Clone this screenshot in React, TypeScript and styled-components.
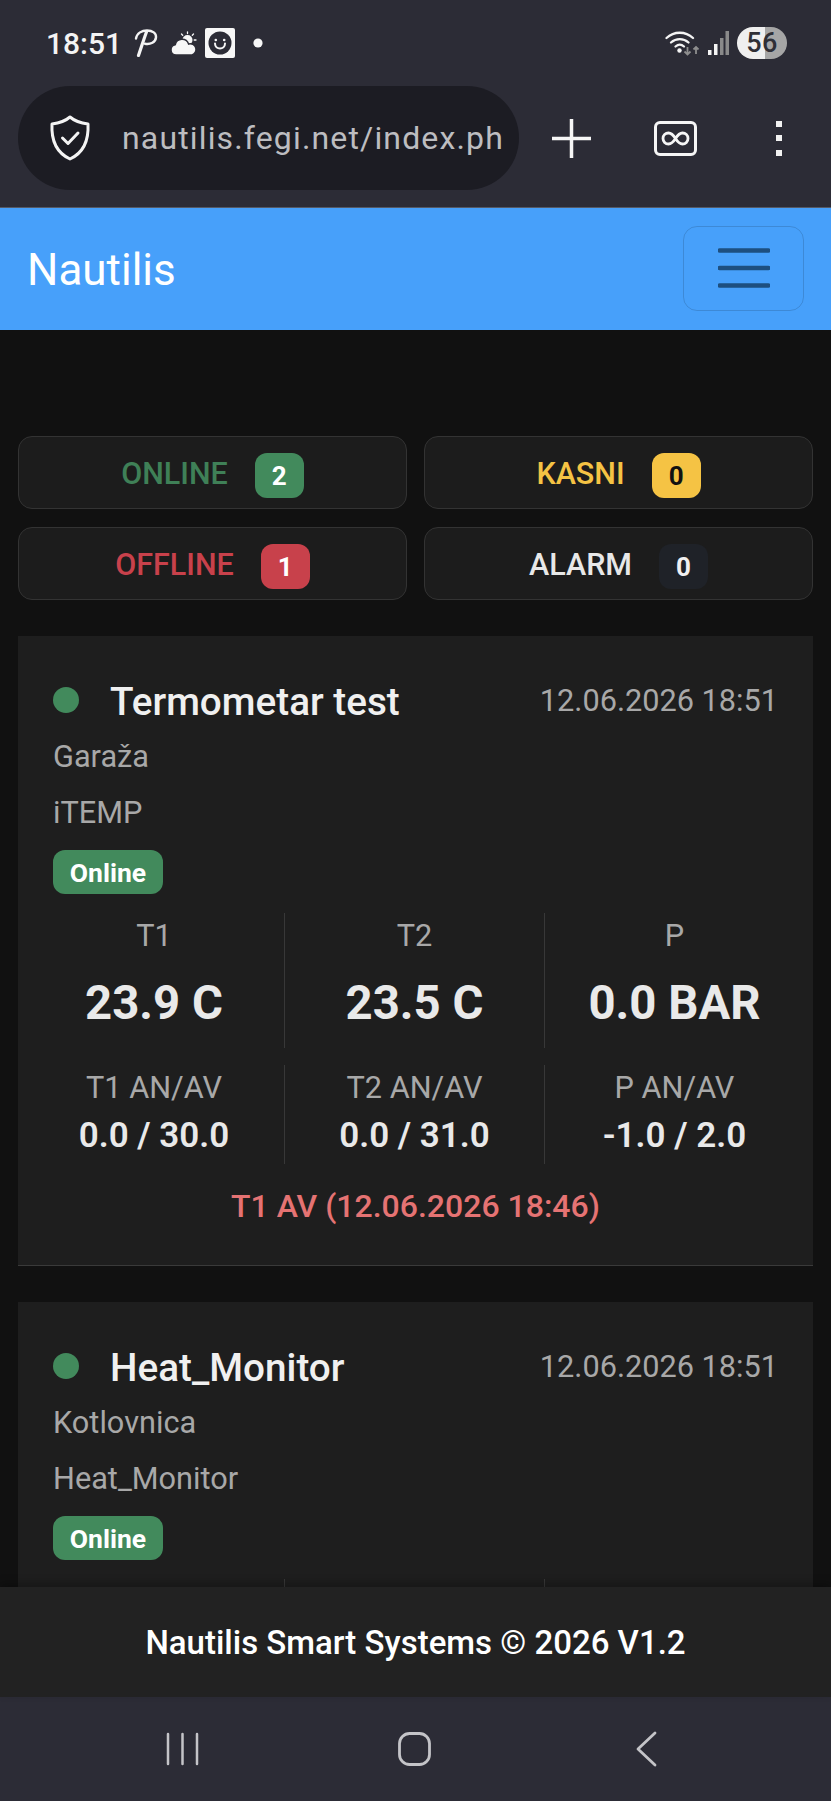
import React from "react";
import styled, { createGlobalStyle } from "styled-components";

const Global = createGlobalStyle`
  html, body { margin: 0; padding: 0; background: #111; }
  * { box-sizing: border-box; }
  body { font-family: Roboto, "Liberation Sans", sans-serif; }
`;

const Page = styled.div`
  width: 831px; height: 1801px; display: flex; flex-direction: column; overflow: hidden; background: #111;
`;
const Chrome = styled.header`
  height: 208px; flex: none; background: #2c2c36; border-bottom: 1px solid #555a66; display: flex; flex-direction: column;
`;
const StatusBar = styled.div`
  height: 86px; display: flex; align-items: center; justify-content: space-between; padding: 0 44px 0 46px;
`;
const StatusGroup = styled.div`
  display: flex; align-items: center;
`;
const Clock = styled.span`
  font-size: 30px; font-weight: 500; color: #f4f4f4; width: 88px;
`;
const Battery = styled.div`
  width: 50px; height: 32px; border-radius: 16px; display: flex; align-items: center; justify-content: center;
  background: linear-gradient(90deg, #efefef 0 56%, #a6a6a6 56% 100%);
  font-size: 27px; font-weight: 500; color: #2f2f36; letter-spacing: .5px;
`;
const BrowserRow = styled.div`
  display: flex; align-items: center; padding-left: 18px; height: 104px;
`;
const UrlPill = styled.div`
  width: 501px; height: 104px; background: #1c1c23; border-radius: 52px; display: flex; align-items: center;
  padding-left: 31px; overflow: hidden; flex: none;
`;
const UrlText = styled.span`
  margin-left: 31px; font-size: 32px; color: #bdbdc0; white-space: nowrap; letter-spacing: 1.15px;
`;
const Action = styled.div`
  width: 104px; flex: none; display: flex; align-items: center; justify-content: center;
`;
const Kebab = styled.div`
  width: 6px; height: 35px; display: flex; flex-direction: column; justify-content: space-between;
  i { display: block; width: 6px; height: 6px; background: #f2f2f2; }
`;
const Navbar = styled.nav`
  height: 122px; flex: none; background: #47a0fa; display: flex; align-items: center; justify-content: space-between; padding: 0 27px 0 27px;
`;
const Brand = styled.span`
  font-size: 44px; color: #fff; line-height: 1; padding-top: 2px;
`;
const Toggler = styled.div`
  width: 121px; height: 85px; margin-top: -2px; border: 1.5px solid rgba(0,0,0,.14); border-radius: 14px; display: flex; align-items: center; justify-content: center;
`;
const Main = styled.main`
  flex: 1; min-height: 0; overflow: hidden; padding: 106px 18px 0;
`;
const StatGrid = styled.div`
  display: grid; grid-template-columns: 389px 389px; column-gap: 17px; row-gap: 18px; margin-bottom: 36px;
`;
const StatButton = styled.div`
  height: 73px; background: #1c1c1c; border: 1.5px solid #333; border-radius: 14px; display: flex; align-items: center; justify-content: center; gap: 27px;
  font-size: 30.5px; font-weight: 500; color: ${p => p.$color};
`;
const StatLabel = styled.span`
  padding-top: 2px;
`;
const StatBadge = styled.span`
  height: 45px; min-width: 49px; padding: 0 16px; margin-top: 6px; border-radius: 12px; display: flex; align-items: center; justify-content: center;
  background: ${p => p.$bg}; color: ${p => p.$fg}; font-size: 26px; font-weight: 700;
`;
const Card = styled.section`
  background: #1e1e1e; border-bottom: 1px solid #3a3a3a; padding: 42px 35px 0; height: 630px; margin-bottom: 36px;
`;
const TitleRow = styled.div`
  display: flex; align-items: center; justify-content: space-between; height: 44px;
`;
const TitleLeft = styled.div`
  display: flex; align-items: center; gap: 31px;
`;
const Dot = styled.span`
  width: 26px; height: 26px; border-radius: 50%; background: #428a5c;
`;
const Title = styled.h2`
  margin: 3px 0 0; font-size: 38.7px; font-weight: 500; color: #f0f0f0; line-height: 44px;
`;
const DateText = styled.span`
  font-size: 30.7px; color: #a8a8a8;
`;
const Meta = styled.div`
  font-size: 30.7px; color: #a8a8a8; line-height: 38px; margin-top: ${p => p.$gap}px;
`;
const StatePill = styled.div`
  margin-top: 18px; width: 110px; height: 44px; border-radius: 12px; background: #428a5c; color: #fff;
  display: flex; align-items: center; justify-content: center; font-size: 26.5px; font-weight: 700;
`;
const MetricGrid = styled.div`
  display: grid; grid-template-columns: repeat(3, 1fr); margin: ${p => p.$top}px -26px 0 -29px; height: ${p => p.$h}px;
`;
const Metric = styled.div`
  text-align: center; border-left: ${p => (p.$first ? "none" : "1px solid #383838")}; display: flex; flex-direction: column; align-items: center;
`;
const MetricLabel = styled.div`
  font-size: 30.7px; color: #a8a8a8; line-height: 38px; margin-top: 4px;
`;
const MetricValue = styled.div`
  font-size: 47.3px; font-weight: 700; color: #e9e9e9; line-height: 54px; margin-top: 21px;
`;
const LimitValue = styled.div`
  font-size: 35px; font-weight: 600; color: #e9e9e9; line-height: 42px; margin-top: 8px;
`;
const AlertLine = styled.div`
  text-align: center; font-size: 32px; font-weight: 500; color: #e57373; line-height: 40px; margin-top: 22px;
`;
const Footer = styled.footer`
  height: 110px; flex: none; background: #222; display: flex; align-items: center; justify-content: center;
  font-size: 33px; font-weight: 500; color: #fff; box-shadow: 0 -4px 8px rgba(0,0,0,.25); position: relative;
`;
const AndroidNav = styled.div`
  height: 104px; flex: none; background: #2c2c36; display: flex; align-items: center; justify-content: center; gap: 199px; padding-right: 2px;
`;

const PLogo = () => (
  <svg width="24" height="28" viewBox="0 0 24 28" style={{ marginRight: 12 }} fill="none" stroke="#f4f4f4" strokeWidth="2.4" strokeLinecap="round">
    <path d="M2 9.5C3 4 8 1.5 13 1.5c5.5 0 9.5 2.6 9 7-.5 4.6-5.5 7.3-11 6.3" />
    <path d="M12.5 3C10 9.5 7.5 18 4.5 26.5" strokeWidth="3.2" />
  </svg>
);
const Weather = () => (
  <svg width="28" height="25" viewBox="0 0 28 25" style={{ marginRight: 7 }} fill="#f7f7f7">
    <circle cx="17.5" cy="9" r="5" />
    <g stroke="#f7f7f7" strokeWidth="1.3" strokeLinecap="round">
      <path d="M17.5 0.8v1.8M11.5 3l1.2 1.3M23.5 3l-1.2 1.3M26 9h-1.8" />
    </g>
    <path d="M6 24a5.2 5.2 0 0 1-.8-10.3A7 7 0 0 1 18.6 13a5.6 5.6 0 0 1 3.4 10.9z" stroke="#2c2c36" strokeWidth="1.5" />
  </svg>
);
const Smiley = () => (
  <svg width="30" height="30" viewBox="0 0 30 30" style={{ marginRight: 18 }}>
    <rect width="30" height="30" rx="2" fill="#f7f7f7" />
    <circle cx="15" cy="15" r="11.5" fill="#2c2c36" />
    <circle cx="10.8" cy="12" r="1.3" fill="#f7f7f7" />
    <circle cx="19.2" cy="12" r="1.3" fill="#f7f7f7" />
    <path d="M10 15.5c0 6.5 10 6.5 10 0" fill="none" stroke="#f7f7f7" strokeWidth="2" strokeLinecap="round" />
  </svg>
);
const StatusDot = () => (
  <svg width="10" height="10" viewBox="0 0 10 10"><circle cx="5" cy="5" r="4.6" fill="#f7f7f7" /></svg>
);
const Wifi = () => (
  <svg width="35" height="26" viewBox="0 0 35 26" fill="none" style={{ marginRight: 8 }}>
    <g stroke="#f4f4f4" strokeWidth="2.3" strokeLinecap="round">
      <path d="M1.5 8C9 1 20.5 1 28 8" />
      <path d="M6 12.5c5-4.5 12.5-4.5 17.5 0" />
      <path d="M10.5 16.5c2.6-2.3 6-2.3 8.5 0" />
    </g>
    <circle cx="14.5" cy="20.5" r="2.2" fill="#f4f4f4" />
    <path d="M22.5 17v7M19.5 21.5l3 3 3-3" stroke="#8e8e8e" strokeWidth="1.8" />
    <path d="M31 24v-7M28.5 19.5l2.5-2.5 2.5 2.5" stroke="#8e8e8e" strokeWidth="1.8" />
  </svg>
);
const Signal = () => (
  <svg width="21" height="24" viewBox="0 0 21 24" style={{ marginRight: 8 }}>
    <rect x="0" y="19" width="3.5" height="5" fill="#f4f4f4" />
    <rect x="6" y="13" width="3.5" height="11" fill="#f4f4f4" />
    <rect x="12" y="7" width="3.5" height="17" fill="#8a8a8a" />
    <rect x="17.5" y="0" width="3.5" height="24" fill="#8a8a8a" />
  </svg>
);
const Shield = () => (
  <svg width="42" height="46" viewBox="0 0 42 46" fill="none" stroke="#f4f4f4" strokeWidth="3" strokeLinejoin="round" strokeLinecap="round">
    <path d="M21 2c4 3.5 10 6 18 7 .8 15-3 28-18 35C6 37 2.2 24 3 9c8-1 14-3.5 18-7z" />
    <path d="M13.5 23l5.5 5.5L29 18" />
  </svg>
);
const Plus = () => (
  <svg width="39" height="39" viewBox="0 0 39 39" stroke="#f6f6f6" strokeWidth="3.5">
    <path d="M0 19.5h39M19.5 0v39" />
  </svg>
);
const TabCount = () => (
  <svg width="43" height="35" viewBox="0 0 43 35" fill="none" stroke="#f6f6f6">
    <rect x="1.5" y="1.5" width="40" height="32" rx="4.5" strokeWidth="3" />
    <path d="M21.5 17.5c-2.5-4-4.5-5.5-7-5.5a5.5 5.5 0 0 0 0 11c2.5 0 4.5-1.5 7-5.5s4.5-5.5 7-5.5a5.5 5.5 0 0 1 0 11c-2.5 0-4.5-1.5-7-5.5z" strokeWidth="2.8" />
  </svg>
);
const Hamburger = () => (
  <svg width="52" height="40" viewBox="0 0 52 40" stroke="#1d4f80" strokeWidth="4.4" strokeLinecap="round">
    <path d="M1.5 2.5h49M1.5 20h49M1.5 37.5h49" />
  </svg>
);
const RecentsIcon = () => (
  <svg width="33" height="34" viewBox="0 0 33 34" stroke="#c4c4c8" strokeWidth="2.5" strokeLinecap="round">
    <path d="M2 2v30M16.5 2v30M31 2v30" />
  </svg>
);
const HomeIcon = () => (
  <svg width="33" height="34" viewBox="0 0 33 34" fill="none" stroke="#c4c4c8" strokeWidth="2.8">
    <rect x="1.5" y="1.5" width="30" height="31" rx="10" />
  </svg>
);
const BackIcon = () => (
  <svg width="33" height="36" viewBox="0 0 33 36" fill="none" stroke="#c4c4c8" strokeWidth="2.8" strokeLinecap="round" strokeLinejoin="round">
    <path d="M25 2 8 18l17 16" />
  </svg>
);

const stats = [
  { label: "ONLINE", n: 2, color: "#3f8057", bg: "#428a5c", fg: "#fff" },
  { label: "KASNI", n: 0, color: "#f5c344", bg: "#f5c344", fg: "#111" },
  { label: "OFFLINE", n: 1, color: "#c8414b", bg: "#c8414b", fg: "#fff" },
  { label: "ALARM", n: 0, color: "#e8e8e8", bg: "#1f2228", fg: "#f0f0f0" },
];

type Reading = { label: string; value: string };

const live: Reading[] = [
  { label: "T1", value: "23.9 C" },
  { label: "T2", value: "23.5 C" },
  { label: "P", value: "0.0 BAR" },
];
const limits: Reading[] = [
  { label: "T1 AN/AV", value: "0.0 / 30.0" },
  { label: "T2 AN/AV", value: "0.0 / 31.0" },
  { label: "P AN/AV", value: "-1.0 / 2.0" },
];

type CardProps = { title: string; place: string; kind: string; alert?: string; showReadings?: boolean };

const DeviceCard = ({ title, place, kind, alert, showReadings = true }: CardProps) => (
  <Card>
    <TitleRow>
      <TitleLeft>
        <Dot />
        <Title>{title}</Title>
      </TitleLeft>
      <DateText>12.06.2026 18:51</DateText>
    </TitleRow>
    <Meta $gap={16}>{place}</Meta>
    <Meta $gap={18}>{kind}</Meta>
    <StatePill>Online</StatePill>
    <MetricGrid $top={19} $h={135}>
      {live.map((m, i) => (
        <Metric key={m.label} $first={i === 0}>
          {showReadings && <MetricLabel>{m.label}</MetricLabel>}
          {showReadings && <MetricValue>{m.value}</MetricValue>}
        </Metric>
      ))}
    </MetricGrid>
    {showReadings && (
      <MetricGrid $top={17} $h={99}>
        {limits.map((m, i) => (
          <Metric key={m.label} $first={i === 0}>
            <MetricLabel>{m.label}</MetricLabel>
            <LimitValue>{m.value}</LimitValue>
          </Metric>
        ))}
      </MetricGrid>
    )}
    {alert && <AlertLine>{alert}</AlertLine>}
  </Card>
);

export default function App() {
  return (
    <Page>
      <Global />
      <Chrome>
        <StatusBar>
          <StatusGroup>
            <Clock>18:51</Clock>
            <PLogo />
            <Weather />
            <Smiley />
            <StatusDot />
          </StatusGroup>
          <StatusGroup>
            <Wifi />
            <Signal />
            <Battery>56</Battery>
          </StatusGroup>
        </StatusBar>
        <BrowserRow>
          <UrlPill>
            <Shield />
            <UrlText>nautilis.fegi.net/index.ph</UrlText>
          </UrlPill>
          <Action><Plus /></Action>
          <Action><TabCount /></Action>
          <Action><Kebab><i /><i /><i /></Kebab></Action>
        </BrowserRow>
      </Chrome>
      <Navbar>
        <Brand>Nautilis</Brand>
        <Toggler><Hamburger /></Toggler>
      </Navbar>
      <Main>
        <StatGrid>
          {stats.map(s => (
            <StatButton key={s.label} $color={s.color}>
              <StatLabel>{s.label}</StatLabel>
              <StatBadge $bg={s.bg} $fg={s.fg}>{s.n}</StatBadge>
            </StatButton>
          ))}
        </StatGrid>
        <DeviceCard title="Termometar test" place="Garaža" kind="iTEMP" alert="T1 AV (12.06.2026 18:46)" />
        <DeviceCard title="Heat_Monitor" place="Kotlovnica" kind="Heat_Monitor" showReadings={false} />
      </Main>
      <Footer>Nautilis Smart Systems © 2026 V1.2</Footer>
      <AndroidNav>
        <RecentsIcon />
        <HomeIcon />
        <BackIcon />
      </AndroidNav>
    </Page>
  );
}
